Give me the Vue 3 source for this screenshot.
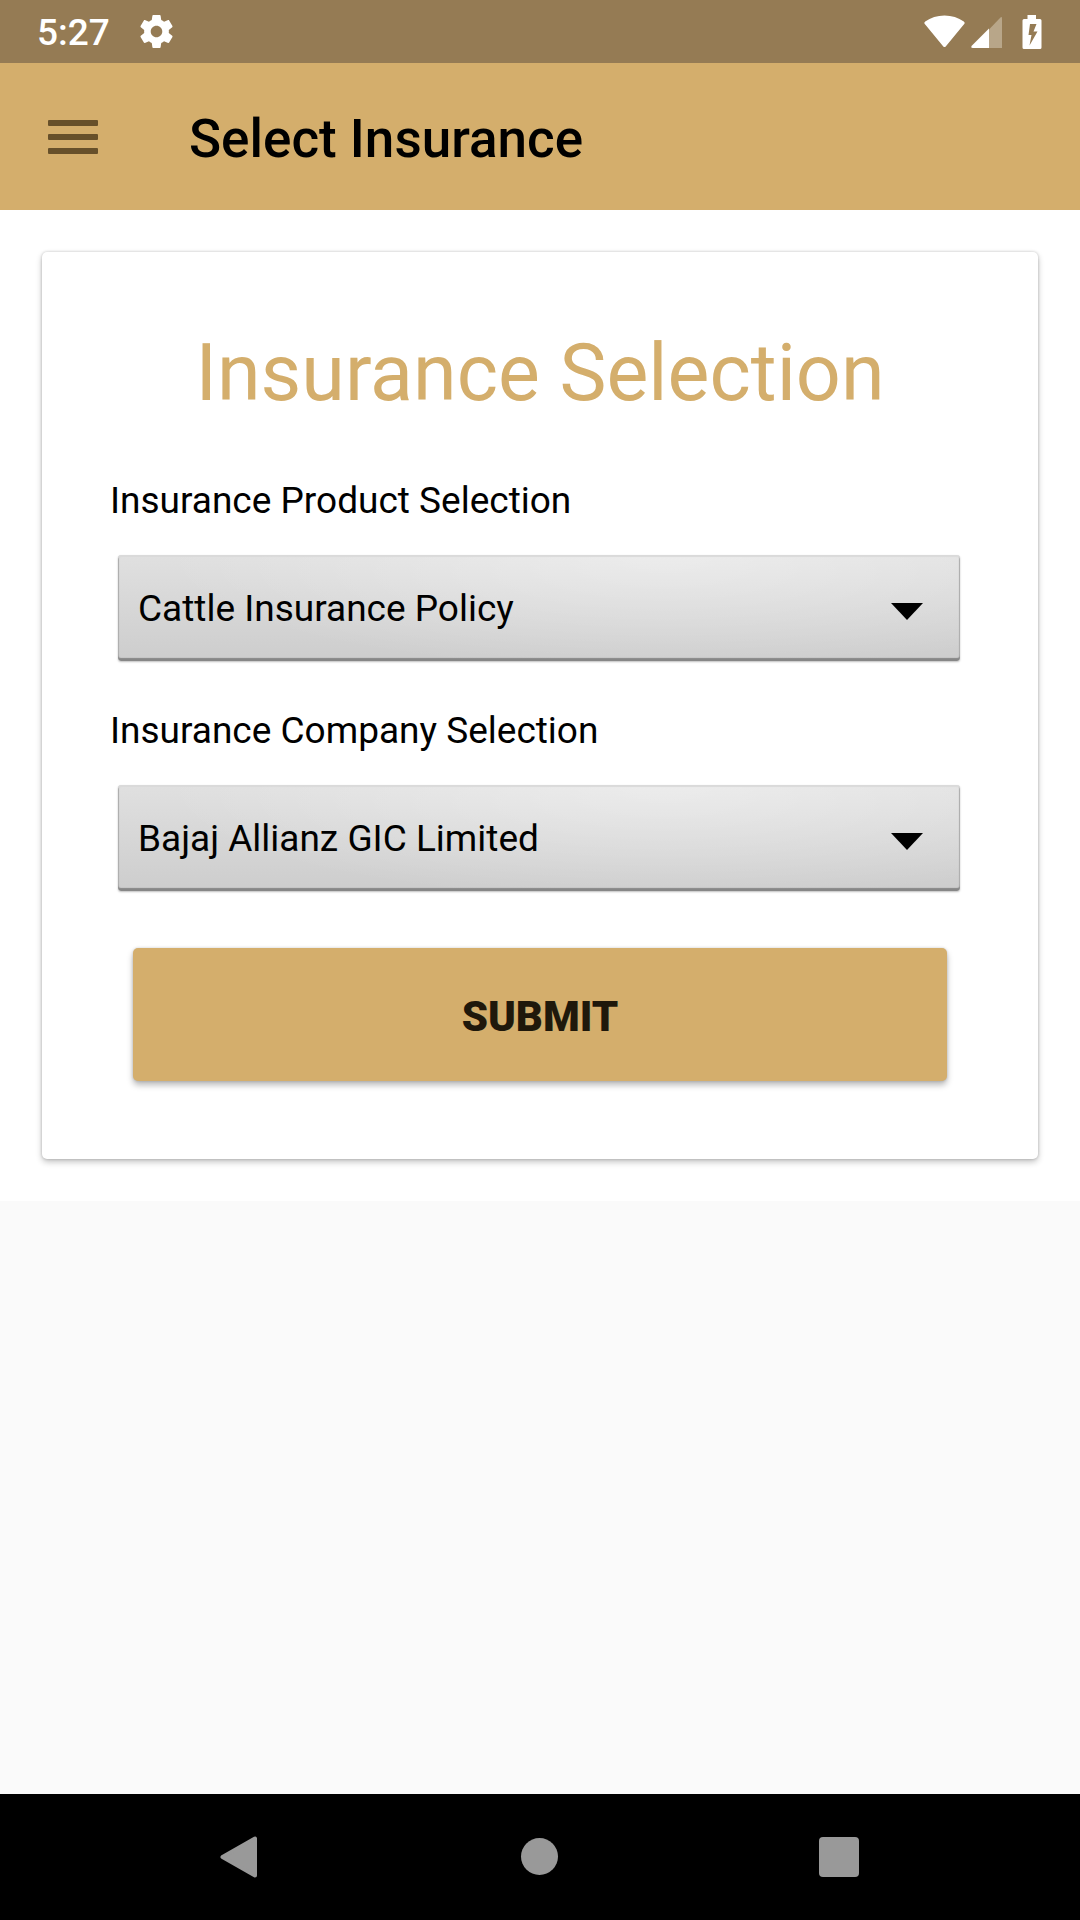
<script setup>
import { ref } from 'vue'

const fields = [
  {
    id: 'product',
    label: 'Insurance Product Selection',
    value: ref('Cattle Insurance Policy'),
    options: ['Cattle Insurance Policy'],
  },
  {
    id: 'company',
    label: 'Insurance Company Selection',
    value: ref('Bajaj Allianz GIC Limited'),
    options: ['Bajaj Allianz GIC Limited'],
  },
]
</script>

<template>
  <div class="screen">
    <div class="status-bar">
      <span class="clock">5:27</span>
      <svg class="gear" viewBox="2 2 20 20" aria-hidden="true">
        <path fill="#fff" d="M19.43 12.98c.04-.32.07-.64.07-.98s-.03-.66-.07-.98l2.11-1.65c.19-.15.24-.42.12-.64l-2-3.46c-.12-.22-.39-.3-.61-.22l-2.49 1c-.52-.4-1.08-.73-1.69-.98l-.38-2.65C14.46 2.18 14.25 2 14 2h-4c-.25 0-.46.18-.49.42l-.38 2.65c-.61.25-1.17.59-1.69.98l-2.49-1c-.23-.09-.49 0-.61.22l-2 3.46c-.13.22-.07.49.12.64l2.11 1.65c-.04.32-.07.65-.07.98s.03.66.07.98l-2.11 1.65c-.19.15-.24.42-.12.64l2 3.46c.12.22.39.3.61.22l2.49-1c.52.4 1.08.73 1.69.98l.38 2.65c.03.24.24.42.49.42h4c.25 0 .46-.18.49-.42l.38-2.65c.61-.25 1.17-.59 1.69-.98l2.49 1c.23.09.49 0 .61-.22l2-3.46c.12-.22.07-.49-.12-.64l-2.11-1.65zM12 15.5c-1.93 0-3.5-1.57-3.5-3.5s1.57-3.5 3.5-3.5 3.5 1.57 3.5 3.5-1.57 3.5-3.5 3.5z" />
      </svg>
      <div class="indicators">
        <svg class="wifi" viewBox="0 0 41 34" aria-hidden="true">
          <path fill="#fff" d="M1.2 6.6Q9.5 .4 20.5 .4T39.8 6.6Q41.3 7.700 40.2 9.100L21.7 31.4Q20.5 32.6 19.3 31.4L.8 9.1Q-.3 7.7 1.2 6.6Z" />
        </svg>
        <svg class="signal" viewBox="0 0 32 34" aria-hidden="true">
          <path fill="#b8a689" d="M18 14.5L29 2.9Q31 1 31 3.5V33H18Z" />
          <path fill="#fff" d="M18 13.5V33H2Q-1 33 1 30.5Z" />
        </svg>
        <svg class="battery" viewBox="0 0 20 34" aria-hidden="true">
          <path fill="#fff" fill-rule="evenodd" d="M5.5 0H14V4H18Q19.5 4 19.5 5.5V32.5Q19.5 34 18 34H2Q.5 34 .5 32.5V5.5Q.5 4 2 4H5.5ZM8 9L6.5 20H9.5L7.5 30.5L15.5 16.5H11.5L14.5 9Z" />
        </svg>
      </div>
    </div>

    <header class="app-bar">
      <button class="menu" type="button" aria-label="Open menu">
        <span></span>
        <span></span>
        <span></span>
      </button>
      <h1>Select Insurance</h1>
    </header>

    <main>
      <div class="sheet">
        <form class="card" @submit.prevent>
          <h2>Insurance Selection</h2>
          <div v-for="field in fields" :key="field.id" class="field">
            <label :for="field.id">{{ field.label }}</label>
            <div class="spinner">
              <select :id="field.id" v-model="field.value.value">
                <option v-for="option in field.options" :key="option">{{ option }}</option>
              </select>
              <svg class="arrow" viewBox="0 0 32 17" aria-hidden="true">
                <path d="M0 0H32L16 17Z" />
              </svg>
            </div>
          </div>
          <button class="submit" type="submit">SUBMIT</button>
        </form>
      </div>
    </main>

    <nav class="nav-bar">
      <button type="button" aria-label="Back">
        <svg viewBox="0 0 42 42" aria-hidden="true">
          <path d="M3.5 21L36 2.5V39.5Z" stroke-width="4" stroke-linejoin="round" />
        </svg>
      </button>
      <button type="button" aria-label="Home">
        <svg viewBox="0 0 42 42" aria-hidden="true">
          <circle cx="20.5" cy="20.5" r="18.5" />
        </svg>
      </button>
      <button type="button" aria-label="Recent apps">
        <svg viewBox="0 0 42 42" aria-hidden="true">
          <rect x="0" y="1" width="40" height="40" rx="4" />
        </svg>
      </button>
    </nav>
  </div>
</template>

<style>
body {
  margin: 0;
  background: #fafafa;
}
</style>

<style scoped>
.screen {
  display: flex;
  flex-direction: column;
  min-height: 100vh;
  font-family: Roboto, 'Liberation Sans', sans-serif;
  color: #000;
}

button,
select {
  font-family: inherit;
  border: 0;
  margin: 0;
  padding: 0;
}

.status-bar {
  display: flex;
  align-items: center;
  height: 63px;
  padding: 0 38px 0 37px;
  background: #957b54;
  color: #fff;
}

.clock {
  font-size: 37px;
  line-height: 60px;
  font-weight: 500;
  padding-top: 3px;
}

.gear {
  width: 33px;
  height: 33px;
  margin-left: 30px;
}

.indicators {
  display: flex;
  align-items: center;
  margin-left: auto;
}

.indicators svg {
  height: 34px;
}

.wifi {
  width: 41px;
}

.signal {
  width: 32px;
  margin-left: 6px;
}

.battery {
  width: 20px;
  margin-left: 19px;
}

.app-bar {
  display: flex;
  align-items: center;
  height: 147px;
  padding: 0 48px;
  background: #d4ae6c;
}

.menu {
  display: flex;
  flex-direction: column;
  gap: 8px;
  width: 50px;
  background: none;
}

.menu span {
  height: 6px;
  border-radius: 1px;
  background: #67502a;
}

h1 {
  margin: 0 0 0 91px;
  padding-top: 4px;
  font-size: 53px;
  line-height: 62px;
  font-weight: 500;
}

main {
  flex: 1;
  background: #fafafa;
}

.sheet {
  padding: 42px;
  background: #fff;
}

.card {
  display: flex;
  flex-direction: column;
  padding: 75px 68px 78px;
  border-radius: 5px;
  background: #fff;
  box-shadow: 0 3px 6px rgba(0, 0, 0, 0.24), 0 0 3px rgba(0, 0, 0, 0.2);
}

h2 {
  margin: 0 0 60px;
  font-size: 79px;
  line-height: 92px;
  font-weight: 400;
  text-align: center;
  color: #d4ae6c;
}

.field {
  display: flex;
  flex-direction: column;
  gap: 32px;
  margin-bottom: 48px;
}

label {
  font-size: 37px;
  line-height: 44px;
}

.spinner {
  position: relative;
  display: flex;
  margin: 0 10px 0 8px;
}

select {
  appearance: none;
  width: 100%;
  height: 106px;
  padding: 0 80px 0 20px;
  border-radius: 3px;
  background:
    radial-gradient(ellipse 60% 110% at 65% 0%, rgba(255, 255, 255, 0.4), rgba(255, 255, 255, 0)),
    linear-gradient(#e0e0e0, #cdcdcd);
  box-shadow: inset 0 2px 1px #dadada, inset 0 -3px 1px #878787, inset 1px 0 1px #aaa, inset -1px 0 1px #aaa, 0 1px 2px rgba(0, 0, 0, 0.25);
  font-size: 37px;
  color: #000;
}

.arrow {
  position: absolute;
  top: 48px;
  right: 37px;
  width: 32px;
  height: 17px;
  pointer-events: none;
}

.submit {
  height: 133px;
  margin: 9px 23px 0;
  padding-top: 4px;
  border-radius: 5px;
  background: #d4ae6c;
  box-shadow: 0 4px 6px rgba(0, 0, 0, 0.28), 0 0 3px rgba(0, 0, 0, 0.16);
  font-size: 42px;
  font-weight: 900;
  color: #1f180b;
}

.nav-bar {
  display: flex;
  justify-content: center;
  height: 126px;
  background: #000;
}

.nav-bar button {
  display: flex;
  align-items: center;
  justify-content: center;
  width: 300px;
  background: none;
}

.nav-bar svg {
  width: 42px;
  height: 42px;
  fill: #999;
  stroke: #999;
  stroke-width: 0;
}
</style>
